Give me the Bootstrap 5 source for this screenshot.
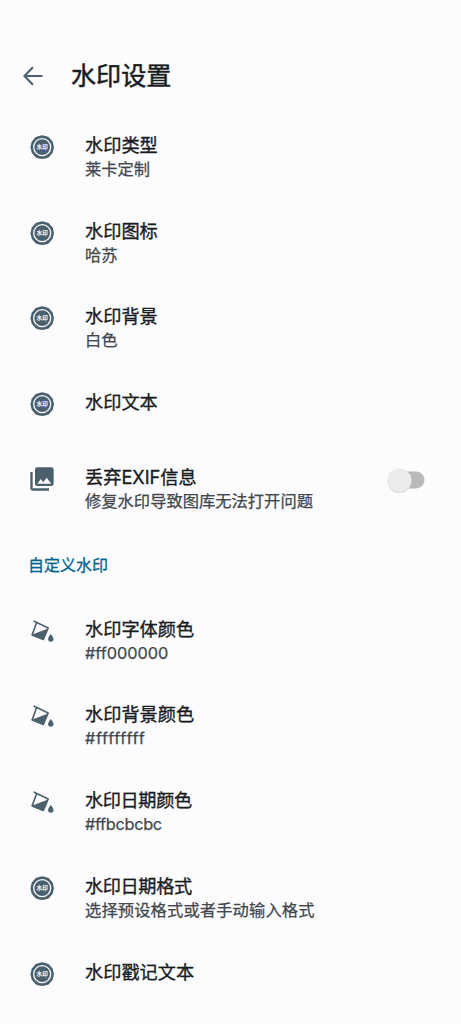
<!DOCTYPE html>
<html lang="zh-CN">
<head>
<meta charset="utf-8">
<meta name="viewport" content="width=device-width, initial-scale=1">
<title>水印设置</title>
<link rel="stylesheet" href="https://cdn.jsdelivr.net/npm/bootstrap@5.3.0/dist/css/bootstrap.min.css">
<style>
body{background:#fcfcff;color:#191c1e;font-family:Inter,"Noto Sans CJK SC",sans-serif;overflow:hidden}
.screen{width:461px;height:1024px}
.topbar{height:107.9px;padding:45px 0 0 23px;gap:28px}
.topbar h1{font-size:25.1px;line-height:62.9px;font-weight:400;-webkit-text-stroke:.5px #191c1e}
.setting{height:85.8px;padding:25px 36px 0 28px}
.setting.single{height:75px}
.setting .glyph{width:28px;height:28px;margin-right:29px;color:#4b606d}
.name{font-size:18.2px;line-height:25px;-webkit-text-stroke:.35px #191c1e}
.value{font-size:16.3px;line-height:23px;color:#41474c;-webkit-text-stroke:.25px #41474c}
.name.tight{letter-spacing:-.4px}
.value.roomy{letter-spacing:.12px}
.value.wide{letter-spacing:.7px}
.value.narrow{letter-spacing:-.3px}
.section-label{height:65.6px;padding:26.5px 0 0 28px;font-size:16px;line-height:24px;color:#00658b;-webkit-text-stroke:.3px #00658b}
.toggle{width:38px;height:26px;margin-top:2px}
</style>
</head>
<body>
<svg class="d-none">
<symbol id="seal" viewBox="0 0 28 28">
<path fill="currentColor" d="M11 2.9 14.2 2.2 17.4 2.9 20.6 4 22.6 6.2 24.8 8.8 25.3 11.4 26 14.2 25.3 17 24.8 19.6 22.6 22.2 20.6 24.4 17.4 25.4 14.2 26 11 25.4 7.8 24.4 5.8 22.2 3.6 19.6 3.1 17 2.4 14.2 3.1 11.4 3.6 8.8 5.8 6.2 7.8 4Z"/>
<circle cx="14.2" cy="14.1" r="8.5" fill="none" stroke="#fcfcff" stroke-width="1.3"/>
<text x="14.2" y="16.1" font-size="5.6" font-weight="700" text-anchor="middle" fill="#fcfcff" font-family="Noto Sans CJK SC, sans-serif">水印</text>
</symbol>
<symbol id="gallery" viewBox="0 0 24 24">
<path fill="currentColor" d="M22 16V4a2 2 0 0 0-2-2H8a2 2 0 0 0-2 2v12a2 2 0 0 0 2 2h12a2 2 0 0 0 2-2zM8 16l3-4 2.03 2.71L16 11l4 5zM2 6v14a2 2 0 0 0 2 2h14v-2H4V6z"/>
</symbol>
<symbol id="bucket" viewBox="0 0 28 28">
<path d="M6.2 4.2 20.2 11 15.3 22.4 4.1 17.9 8.7 5.5" fill="none" stroke="currentColor" stroke-width="1.6" stroke-linejoin="round" stroke-linecap="round"/>
<path fill="currentColor" d="M4.4 17.6 18.9 12.1 20 11.4 15.3 22.5Z"/>
<path fill="currentColor" d="M22.8 17C21.6 18.9 20.1 20.2 20.1 22a2.7 2.7 0 0 0 5.4 0c0-1.8-1.5-3.1-2.7-5z"/>
</symbol>
</svg>
<main class="screen d-flex flex-column">
<header class="topbar d-flex align-items-center flex-shrink-0">
<svg width="20" height="20" viewBox="0 0 20 20" fill="none" stroke="#4b606d" stroke-width="2.1"><path d="M19.5 10H2M10 1.2 1.4 10 10 18.8"/></svg>
<h1 class="m-0">水印设置</h1>
</header>
<section>
<div class="setting d-flex"><svg class="glyph"><use href="#seal"/></svg><div><div class="name">水印类型</div><div class="value">莱卡定制</div></div></div>
<div class="setting d-flex"><svg class="glyph"><use href="#seal"/></svg><div><div class="name">水印图标</div><div class="value">哈苏</div></div></div>
<div class="setting d-flex"><svg class="glyph"><use href="#seal"/></svg><div><div class="name">水印背景</div><div class="value">白色</div></div></div>
<div class="setting single d-flex"><svg class="glyph"><use href="#seal"/></svg><div class="name">水印文本</div></div>
<div class="setting d-flex"><svg class="glyph"><use href="#gallery"/></svg><div class="flex-grow-1"><div class="name">丢弃EXIF信息</div><div class="value">修复水印导致图库无法打开问题</div></div>
<svg class="toggle" viewBox="0 0 38 26" role="switch" aria-checked="false"><rect x="9" y="4.5" width="28.5" height="17" rx="8.5" fill="#b9b9bb"/><circle cx="12.5" cy="14" r="12" fill="#d9d9dc"/><circle cx="12.5" cy="13.3" r="11.7" fill="#ececec"/></svg></div>
</section>
<section>
<div class="section-label">自定义水印</div>
<div class="setting d-flex"><svg class="glyph"><use href="#bucket"/></svg><div><div class="name">水印字体颜色</div><div class="value">#ff000000</div></div></div>
<div class="setting d-flex"><svg class="glyph"><use href="#bucket"/></svg><div><div class="name">水印背景颜色</div><div class="value wide">#ffffffff</div></div></div>
<div class="setting d-flex"><svg class="glyph"><use href="#bucket"/></svg><div><div class="name tight">水印日期颜色</div><div class="value narrow">#ffbcbcbc</div></div></div>
<div class="setting d-flex"><svg class="glyph"><use href="#seal"/></svg><div><div class="name tight">水印日期格式</div><div class="value roomy">选择预设格式或者手动输入格式</div></div></div>
<div class="setting single d-flex"><svg class="glyph"><use href="#seal"/></svg><div class="name">水印戳记文本</div></div>
</section>
</main>
<script src="https://cdn.jsdelivr.net/npm/bootstrap@5.3.0/dist/js/bootstrap.bundle.min.js"></script>
</body>
</html>
